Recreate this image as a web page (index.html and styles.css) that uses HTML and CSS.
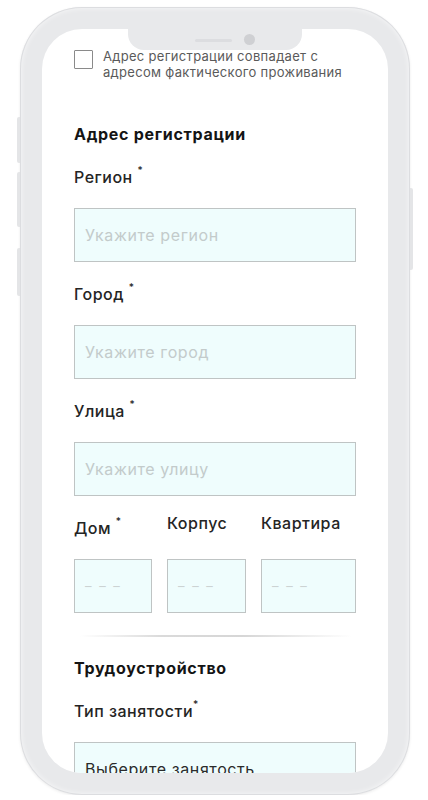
FILE: index.html
```html
<!DOCTYPE html>
<html lang="ru">
<head>
    <meta charset="UTF-8">
    <meta name="viewport" content="width=device-width, initial-scale=1.0">
    <title>Анкета — адрес регистрации</title>
    <link rel="stylesheet" href="styles.css">
</head>
<body>
    <div class="phone">
        <span class="side-btn side-left btn-1"></span>
        <span class="side-btn side-left btn-2"></span>
        <span class="side-btn side-left btn-3"></span>
        <span class="side-btn side-right btn-4"></span>

        <div class="screen">
            <div class="notch">
                <span class="speaker"></span>
                <span class="camera"></span>
            </div>

            <div class="form">
                <label class="check-row">
                    <span class="checkbox"></span>
                    <span class="check-text">Адрес регистрации совпадает с адресом фактического проживания</span>
                </label>

                <h3 class="section-title">Адрес регистрации</h3>

                <div class="field">
                    <div class="label">Регион <sup>*</sup></div>
                    <div class="input placeholder">Укажите регион</div>
                </div>

                <div class="field">
                    <div class="label">Город <sup>*</sup></div>
                    <div class="input placeholder">Укажите город</div>
                </div>

                <div class="field">
                    <div class="label">Улица <sup>*</sup></div>
                    <div class="input placeholder">Укажите улицу</div>
                </div>

                <div class="house-row">
                    <div class="field">
                        <div class="label label-low">Дом <sup>*</sup></div>
                        <div class="input placeholder dashes">– – –</div>
                    </div>
                    <div class="field">
                        <div class="label">Корпус</div>
                        <div class="input placeholder dashes">– – –</div>
                    </div>
                    <div class="field">
                        <div class="label">Квартира</div>
                        <div class="input placeholder dashes">– – –</div>
                    </div>
                </div>

                <hr class="divider">

                <h3 class="section-title">Трудоустройство</h3>

                <div class="field">
                    <div class="label">Тип занятости<sup>*</sup></div>
                    <div class="input select">Выберите занятость</div>
                </div>
            </div>
        </div>
    </div>
</body>
</html>
```

FILE: styles.css
```css
body {
    margin: 0;
    background: #ffffff;
    font-family: Inter, "Noto Sans", sans-serif;
    color: #222;
}

/* device frame */
.phone {
    position: relative;
    width: 390px;
    height: 788px;
    margin: 7px 0 0 20px;
    padding: 22px;
    box-sizing: border-box;
    border-radius: 62px;
    background: #e8e9eb;
    box-shadow: inset 0 0 0 1px #dcdde0, inset 0 0 6px rgba(255,255,255,0.9), 0 1px 3px rgba(0,0,0,0.08);
}

.side-btn {
    position: absolute;
    width: 3px;
    background: #e4e5e7;
}

.side-left {
    left: -3px;
    border-radius: 2px 0 0 2px;
}

.side-right {
    right: -3px;
    border-radius: 0 2px 2px 0;
}

.btn-1 { top: 110px; height: 46px; }
.btn-2 { top: 165px; height: 55px; }
.btn-3 { top: 241px; height: 48px; }
.btn-4 { top: 181px; height: 82px; }

.screen {
    position: relative;
    height: 100%;
    background: #fff;
    border-radius: 40px;
    overflow: hidden;
}

.notch {
    position: absolute;
    top: 0;
    left: 86px;
    width: 174px;
    height: 21px;
    background: #e8e9eb;
    border-radius: 0 0 16px 16px;
}

.speaker {
    position: absolute;
    top: 10px;
    left: 67px;
    width: 37px;
    height: 3px;
    border-radius: 2px;
    background: #dcdde0;
}

.camera {
    position: absolute;
    top: 5px;
    left: 116px;
    width: 11px;
    height: 11px;
    border-radius: 50%;
    background: #cfd0d3;
}

/* form */
.form {
    padding: 21px 32px 0;
}

.check-row {
    display: flex;
    gap: 10px;
    align-items: flex-start;
}

.checkbox {
    flex: none;
    width: 17px;
    height: 17px;
    border: 1px solid #8a8a8a;
    border-radius: 1px;
}

.check-text {
    font-size: 13px;
    line-height: 16px;
    letter-spacing: 0.3px;
    color: #5a5a5a;
    margin-top: -2px;
}

.section-title {
    margin: 43px 0 22px;
    font-size: 16px;
    font-weight: 700;
    line-height: 22px;
    letter-spacing: 0.7px;
    color: #141414;
}

.field {
    margin-bottom: 22px;
}

.label {
    font-size: 16px;
    line-height: 20px;
    font-weight: 500;
    letter-spacing: 0.5px;
    color: #242424;
    margin-bottom: 21px;
}

.label sup {
    font-size: 10px;
    line-height: 0;
    vertical-align: 9px;
}

.input {
    height: 54px;
    box-sizing: border-box;
    padding: 0 10px;
    display: flex;
    align-items: center;
    background: #effdfd;
    border: 1px solid #bfc4c4;
    font-size: 16px;
    letter-spacing: 0.6px;
}

.placeholder {
    color: #c3cbcb;
}

.dashes {
    letter-spacing: 2px;
    font-size: 13px;
    color: #ccd3d3;
}

.select {
    color: #2b2b2b;
}

/* house / building / flat in one row */
.house-row {
    display: grid;
    grid-template-columns: 78px 79px 1fr;
    gap: 15px;
    margin-top: -5px;
}

.house-row .field {
    margin-bottom: 0;
}

.house-row .label {
    margin-bottom: 26px;
}

.house-row .label-low {
    padding-top: 5px;
    margin-bottom: 21px;
}

.divider {
    height: 2px;
    margin: 22px 4px 0 6px;
    border: none;
    background: linear-gradient(to right, rgba(220,220,220,0), #dadada 30%, #d6d6d6 60%, rgba(220,220,220,0));
}

.divider + .section-title {
    margin-top: 20px;
}
```
